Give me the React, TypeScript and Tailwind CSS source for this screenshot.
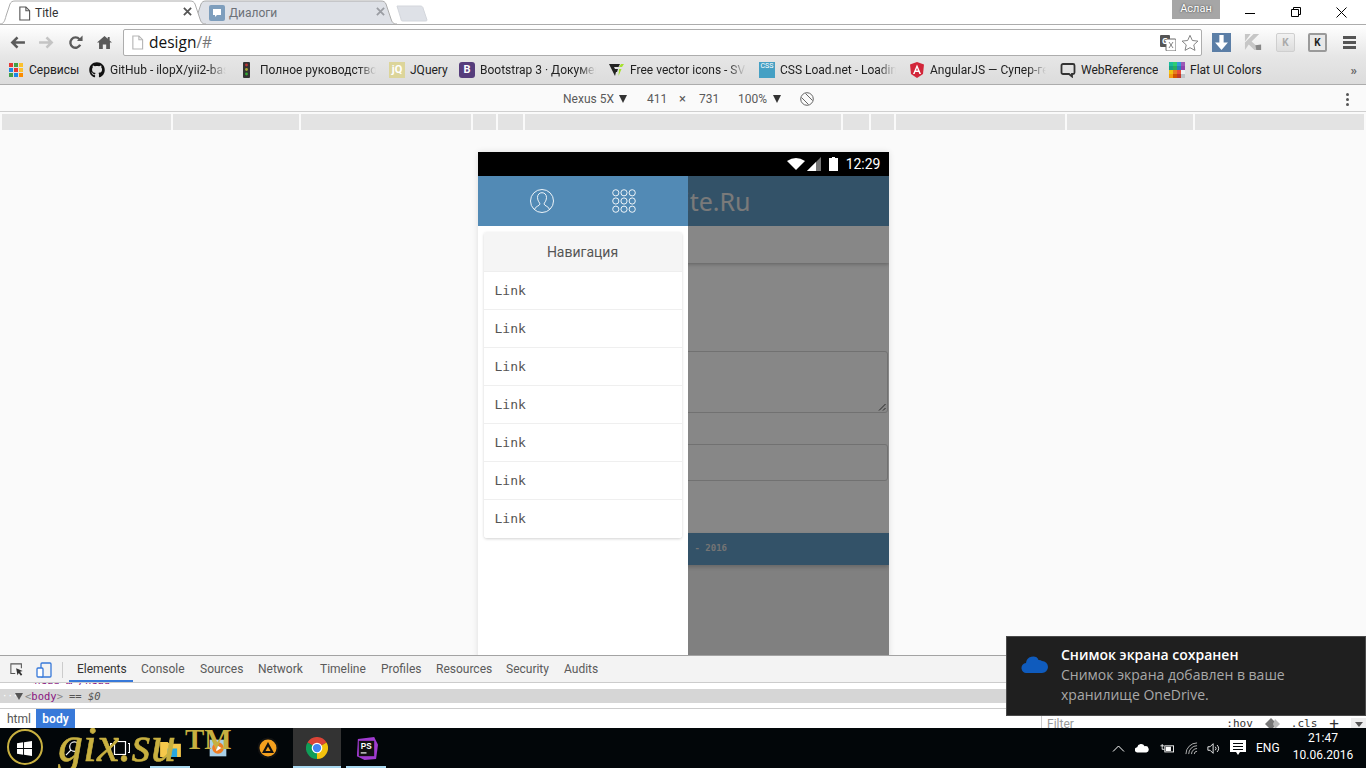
import React from "react";
import { FaGithub } from "react-icons/fa";

const chromeFont = "[font-family:Roboto,'Noto_Sans',sans-serif]";
const toastFont = "[font-family:'Open_Sans','Noto_Sans',sans-serif]";

function Doc({ className = "" }: { className?: string }) {
  return (
    <svg viewBox="0 0 14 16" className={className} fill="none" stroke="currentColor" strokeWidth="1.2">
      <path d="M2 1h6.5L12.5 5v10H2z" fill="#fff" />
      <path d="M8.5 1v4h4" />
    </svg>
  );
}

function X({ className = "" }: { className?: string }) {
  return (
    <svg viewBox="0 0 10 10" className={className} stroke="currentColor" strokeWidth="2">
      <path d="M1 1l8 8M9 1l-8 8" />
    </svg>
  );
}

function TabShape({ fill, stroke }: { fill: string; stroke: string }) {
  return (
    <svg viewBox="0 0 206 24" preserveAspectRatio="none" className="absolute inset-0 h-full w-full">
      <path d="M0 24C4 24 5 20 6 16L10 4C11 2 12 1 15 1H190C193 1 194 2 195 4L200 19C201 22 202 24 206 24" fill={fill} stroke={stroke} strokeWidth="1" />
    </svg>
  );
}

function Tab({ active, title, close, closeRight, icon }: { active?: boolean; title: string; close: string; closeRight: string; icon: React.ReactNode }) {
  return (
    <div className={`relative flex h-6 w-[206px] shrink-0 items-center pl-[18px] pt-[2px] ${active ? "z-10" : "-ml-[15px]"}`}>
      <TabShape fill={active ? "#ffffff" : "#dee1e7"} stroke="#acacac" />
      <div className="relative flex w-full items-center">
        {icon}
        <span className={`ml-[4px] text-[12px] ${active ? "text-[#333]" : "text-[#6d7178]"}`}>{title}</span>
        <X className={`absolute top-[3px] h-[9px] w-[9px] ${closeRight} ${close}`} />
      </div>
    </div>
  );
}

const bookmarks: { w: number; text: string; fade?: boolean; icon: React.ReactNode }[] = [
  {
    w: 81,
    text: "Сервисы",
    icon: (
      <svg viewBox="0 0 14 14" className="h-[14px] w-[14px]">
        {["#e53935", "#43a047", "#fbc02d", "#1e88e5", "#e53935", "#fbc02d", "#43a047", "#1e88e5", "#fb8c00"].map((c, i) => (
          <rect key={i} x={(i % 3) * 5} y={Math.floor(i / 3) * 5} width="4" height="4" fill={c} />
        ))}
      </svg>
    ),
  },
  { w: 150, text: "GitHub - ilopX/yii2-basic", fade: true, icon: <FaGithub className="h-4 w-4 text-[#111]" /> },
  {
    w: 150,
    text: "Полное руководство по",
    fade: true,
    icon: (
      <svg viewBox="0 0 16 16" className="h-4 w-4">
        <rect x="4" y="0" width="7" height="16" rx="1" fill="#333" />
        <circle cx="7.500" cy="3" r="1.400" fill="#b33" />
        <circle cx="7.500" cy="7.500" r="1.400" fill="#aa3" />
        <circle cx="7.500" cy="12" r="1.400" fill="#3a3" />
      </svg>
    ),
  },
  {
    w: 70,
    text: "JQuery",
    icon: <span className="flex h-4 w-4 items-center justify-center bg-[#dcd59a] text-[11px] font-bold text-white">jQ</span>,
  },
  {
    w: 150,
    text: "Bootstrap 3 · Документация",
    fade: true,
    icon: <span className="flex h-4 w-4 items-center justify-center rounded-[3px] bg-[#563d7c] text-[11px] font-bold text-white">B</span>,
  },
  {
    w: 150,
    text: "Free vector icons - SVG",
    fade: true,
    icon: (
      <svg viewBox="0 0 16 16" className="h-4 w-4">
        <path d="M0 2h11l-1.500 3H5l1 2h3l-1 3-1 0-1 4z" fill="#222" />
        <path d="M12 2h3l-2 3h-3zM10 7h2.500l-3 7z" fill="#a6e22e" />
      </svg>
    ),
  },
  {
    w: 150,
    text: "CSS Load.net - Loading",
    fade: true,
    icon: (
      <span className="flex h-4 w-4 items-start justify-center bg-[#45a0c4] text-[7px] leading-[8px] text-white">CSS</span>
    ),
  },
  {
    w: 151,
    text: "AngularJS — Супер-геройский",
    fade: true,
    icon: (
      <svg viewBox="0 0 16 16" className="h-4 w-4">
        <path d="M8 0L15 2.500 14 12 8 16 2 12 1 2.500z" fill="#d2263a" />
        <path d="M8 2.500L4 12h1.600l.8-2h3.200l.8 2H12zM7 8.600L8 6l1 2.600z" fill="#fff" />
      </svg>
    ),
  },
  {
    w: 109,
    text: "WebReference",
    icon: (
      <svg viewBox="0 0 16 16" className="h-4 w-4" fill="none" stroke="#333" strokeWidth="1.8">
        <path d="M3 2h10a1.500 1.500 0 0 1 1.500 1.500v7A1.500 1.500 0 0 1 13 12h-1v2.500L9 12H3a1.500 1.500 0 0 1-1.500-1.500v-7A1.500 1.500 0 0 1 3 2z" />
      </svg>
    ),
  },
  {
    w: 150,
    text: "Flat UI Colors",
    icon: (
      <svg viewBox="0 0 15 15" className="h-4 w-4">
        {["#1abc9c", "#2ecc71", "#3498db", "#9b59b6", "#16a085", "#27ae60", "#2980b9", "#8e44ad", "#f1c40f", "#e67e22", "#e74c3c", "#ecf0f1", "#f39c12", "#d35400", "#c0392b", "#bdc3c7"].map((c, i) => (
          <rect key={i} x={(i % 4) * 3.75} y={Math.floor(i / 4) * 3.75} width="3.750" height="3.750" fill={c} />
        ))}
      </svg>
    ),
  },
];

const segments = [169, 126, 170, 23, 25, 316, 26, 23, 169, 126, 169];
const devTabs: [string, number][] = [
  ["Elements", 64],
  ["Console", 59],
  ["Sources", 58],
  ["Network", 62],
  ["Timeline", 61],
  ["Profiles", 55],
  ["Resources", 70],
  ["Security", 58],
  ["Audits", 50],
];

function Chrome() {
  return (
    <svg viewBox="0 0 24 24" className="h-[22px] w-[22px]">
      <path d="M12 12L1.600 6A12 12 0 0 1 22.400 6Z" fill="#db4437" />
      <path d="M12 12L22.400 6A12 12 0 0 1 12 24Z" fill="#f4c20d" />
      <path d="M12 12L12 24A12 12 0 0 1 1.600 6Z" fill="#0f9d58" />
      <circle cx="12" cy="12" r="5.800" fill="#fff" />
      <circle cx="12" cy="12" r="4.500" fill="#4285f4" />
    </svg>
  );
}

function Cell({ children, w = "w-12", className = "" }: { children?: React.ReactNode; w?: string; className?: string }) {
  return <div className={`relative flex h-10 shrink-0 items-center justify-center ${w} ${className}`}>{children}</div>;
}

function Tri() {
  return <span className="h-0 w-0 shrink-0 border-x-[4px] border-t-[8px] border-x-transparent border-t-[#333]" />;
}

export default function App() {
  return (
    <div className={`relative flex h-[768px] w-[1366px] flex-col overflow-hidden bg-[#fafafa] ${chromeFont}`}>
      {/* Tab strip */}
      <div className="flex h-[25px] shrink-0 items-start border-b border-[#acacac] bg-white">
        <Tab active title="Title" close="text-[#555]" closeRight="right-[14px]" icon={<Doc className="h-[15px] w-[13px] text-[#555]" />} />
        <Tab
          title="Диалоги"
          close="text-[#9a9da3]"
          closeRight="right-[12px]"
          icon={
            <svg viewBox="0 0 16 16" className="h-4 w-4">
              <rect width="16" height="16" rx="2" fill="#7e9ebd" />
              <path d="M4 4h8v6H8l-2 2v-2H4z" fill="#fff" />
            </svg>
          }
        />
        <svg viewBox="0 0 32 17" className="-ml-[1px] mt-[5px] h-[17px] w-[32px] shrink-0">
          <path d="M1 1H24C26 1 27 2 27 3L31 15C31 16 30 16 29 16H7C5 16 5 15 5 14Z" fill="#dee1e7" stroke="#d3d6dc" />
        </svg>
        <div className="flex-1" />
        <div className="mr-[7px] flex h-[19px] w-[48px] items-center justify-center bg-[#a6a6a6] text-[11px] text-white [text-shadow:0_0_2px_#333]">Аслан</div>
        <div className="flex h-6 w-[139px] items-center">
          <div className="flex w-[46px] justify-center pt-px">
            <div className="mt-px h-px w-[10px] bg-black" />
          </div>
          <div className="flex w-[45px] justify-center">
            <svg viewBox="0 0 10 10" className="h-[10px] w-[10px]" fill="none" stroke="#000">
              <path d="M.5 2.500h7v7h-7zM2.500 2.500v-2h7v7h-2" />
            </svg>
          </div>
          <div className="flex w-[46px] justify-center">
            <svg viewBox="0 0 11 11" className="h-[11px] w-[11px]" stroke="#000">
              <path d="M.5.5l10 10M10.500.5l-10 10" />
            </svg>
          </div>
        </div>
      </div>

      {/* Toolbar */}
      <div className="flex h-[32px] shrink-0 items-center bg-gradient-to-b from-white to-[#e6e6e6] pb-px pt-[4px]">
        <div className="flex w-[32px] justify-center pl-[2px]">
          <svg viewBox="0 0 16 14" className="h-[13px] w-[15px]" fill="none" stroke="#5a5a5a" strokeWidth="2.800">
            <path d="M16 7H3M8 1.500L2.500 7 8 12.500" />
          </svg>
        </div>
        <div className="flex w-[29px] justify-center">
          <svg viewBox="0 0 16 14" className="h-[13px] w-[15px]" fill="none" stroke="#c4c4c4" strokeWidth="2.800">
            <path d="M0 7h13M8 1.500L13.500 7 8 12.500" />
          </svg>
        </div>
        <div className="flex w-[29px] justify-center">
          <svg viewBox="0 0 16 16" className="h-[15px] w-[15px]" fill="none">
            <path d="M13 10.500A5.500 5.500 0 1 1 12.200 4.500" stroke="#5a5a5a" strokeWidth="2.500" />
            <path d="M9.500 6.500H15.500V.5z" fill="#5a5a5a" />
          </svg>
        </div>
        <div className="flex w-[29px] justify-center">
          <svg viewBox="0 0 16 16" className="h-[15px] w-[15px]">
            <path d="M8 1L0 8h2.200v7h4V10h3.600v5h4V8H16l-2.500-2.200V2h-2v2z" fill="#5a5a5a" />
          </svg>
        </div>
        <div className={`ml-[4px] flex h-[27px] w-[1079px] items-center rounded-[2px] border border-[#adadad] bg-white pl-[7px] pr-[2px] ${toastFont}`}>
          <Doc className="h-[15px] w-[13px] text-[#b5b5b5]" />
          <span className="ml-[5px] text-[15.5px] leading-none text-[#111]">
            design<span className="text-[#777]">/#</span>
          </span>
          <div className="flex-1" />
          <svg viewBox="0 0 16 16" className="h-4 w-4">
            <rect x="0" y="0" width="10" height="12" rx="1" fill="#555" />
            <rect x="6" y="4" width="10" height="12" rx="1" fill="#fff" stroke="#666" />
            <text x="2" y="9" fontSize="8" fontWeight="700" fill="#fff">G</text>
            <path d="M9 7l4 6M13 7l-4 6" stroke="#666" strokeWidth="0.800" />
          </svg>
          <svg viewBox="0 0 20 20" className="ml-[5px] h-[18px] w-[18px]" fill="#fff" stroke="#777">
            <path d="M10 1.500l2.600 5.700 6.200.7-4.600 4.200 1.300 6.100L10 15.200l-5.500 3 1.300-6.100L1.200 7.900l6.200-.7z" />
          </svg>
        </div>
        <div className="ml-[10px] flex h-[19px] w-[19px] items-center justify-center bg-[#5b7ea6]">
          <svg viewBox="0 0 14 14" className="h-[15px] w-[15px]">
            <path d="M5 0h4v7h4l-6 7-6-7h4z" fill="#fff" />
          </svg>
        </div>
        <svg viewBox="0 0 20 20" className="ml-[13px] h-[19px] w-[19px]">
          <path d="M1 1h6L1 9zM1 10l9-9h6L8 9l10 9h-7L5 12l-4 6z" fill="#c6c6c6" />
          <path d="M12 13l6-1v6h-5z" fill="#888" />
        </svg>
        <div className="ml-[13px] flex h-[19px] w-[19px] items-center justify-center rounded-[2px] border border-[#cfcfcf] bg-gradient-to-b from-[#f2f2f2] to-[#dddddd] text-[10px] font-bold text-[#aaa]">K</div>
        <div className="ml-[13px] flex h-[19px] w-[19px] items-center justify-center rounded-[2px] border-2 border-[#9a9a9a] bg-[#e8e8e8] text-[10px] font-bold text-[#222]">K</div>
        <div className="ml-[16px] flex w-[13px] flex-col gap-[2px]">
          <div className="h-[3px] bg-[#555]" />
          <div className="h-[3px] bg-[#555]" />
          <div className="h-[3px] bg-[#555]" />
        </div>
      </div>

      {/* Bookmarks */}
      <div className="flex h-[28px] shrink-0 items-center border-b border-[#acacac] bg-gradient-to-b from-[#e6e6e6] to-[#dcdcdc] pb-px pl-[8px]">
        {bookmarks.map((b) => (
          <div key={b.text} className="flex shrink-0 items-center" style={{ width: b.w }}>
            <div className="flex w-4 shrink-0 justify-center">{b.icon}</div>
            <span
              className={`ml-[5px] overflow-hidden whitespace-nowrap text-[12px] leading-4 text-[#222] ${b.fade ? "w-[116px] [mask-image:linear-gradient(to_right,black_85%,transparent)]" : ""}`}
            >
              {b.text}
            </span>
          </div>
        ))}
        <div className="flex-1" />
        <span className="mr-[9px] text-[13px] font-bold leading-none text-[#666]">»</span>
      </div>

      {/* Device bar */}
      <div className="relative flex h-[27px] shrink-0 items-center border-b border-[#cfcfcf] bg-[#fafafa] pt-[2px] text-[12px] text-[#5a5a5a]">
        <span className="ml-[563px] w-[56px]">Nexus 5X</span>
        <Tri />
        <span className="ml-[20px] w-[32px]">411</span>
        <span className="w-[20px] text-[13px]">×</span>
        <span className="w-[39px]">731</span>
        <span className="w-[35px]">100%</span>
        <Tri />
        <svg viewBox="0 0 14 14" className="ml-[19px] h-[14px] w-[14px]" fill="none" stroke="#666">
          <circle cx="7" cy="7" r="6.300" />
          <path d="M1.500 5.500l7 7M5.500 1.500l7 7" />
        </svg>
        <div className="ml-auto mr-[17px] flex flex-col gap-[2px]">
          <div className="h-[3px] w-[3px] rounded-full bg-[#555]" />
          <div className="h-[3px] w-[3px] rounded-full bg-[#555]" />
          <div className="h-[3px] w-[3px] rounded-full bg-[#555]" />
        </div>
      </div>

      {/* Media query bar */}
      <div className="mt-[2px] flex h-[16px] shrink-0 gap-[2px] px-[2px]">
        {segments.map((w, i) => (
          <div key={i} className="h-full bg-[#e3e3e3]" style={{ width: w }} />
        ))}
      </div>

      {/* Emulated viewport */}
      <div className="h-[525px] shrink-0 overflow-hidden bg-[#fafafa] pt-[22px]">
        <div className="relative mx-auto flex h-[731px] w-[411px] flex-col overflow-hidden bg-white shadow-[0_0_6px_rgba(0,0,0,0.12)]">
          <div className="flex h-6 shrink-0 items-center justify-end bg-black pr-2">
            <svg viewBox="0 0 18 12" className="h-3 w-[18px]">
              <path d="M0 3Q9-3 18 3L9 12z" fill="#fff" />
            </svg>
            <svg viewBox="0 0 14 14" className="ml-[2px] h-[14px] w-[14px]">
              <path d="M14 0V14H0z" fill="#777" />
              <path d="M9 5V14H0z" fill="#fff" />
            </svg>
            <svg viewBox="0 0 9 14" className="ml-[8px] h-[14px] w-[9px]">
              <path d="M3 0h3v1h3v13H0V1h3z" fill="#fff" />
            </svg>
            <span className="ml-[8px] text-[14px] text-white">12:29</span>
          </div>
          <div className="relative flex h-[50px] shrink-0 items-center bg-[#609bc4] pl-[192px]">
            <span className="[font-family:'Noto_Sans',sans-serif] text-[25px] leading-none text-[#e6e6e6]">Site.Ru</span>
          </div>
          <div className="h-[37px] shrink-0 bg-white shadow-[0_1px_4px_rgba(0,0,0,0.3)]" />
          <div className="flex-1 px-[1px] pt-[88px]">
            <div className="relative ml-auto h-[62px] w-[300px] rounded-[3px] border border-[#d5d5d5]">
              <svg viewBox="0 0 8 8" className="absolute bottom-[1px] right-[1px] h-2 w-2" stroke="#333" strokeWidth="0.900">
                <path d="M1 7.500L7.500 1M5 7.500L7.500 5" />
              </svg>
            </div>
            <div className="ml-auto mt-[31px] h-[37px] w-[300px] rounded-[3px] border border-[#d5d5d5]" />
          </div>
          <div className="absolute inset-x-0 bottom-0 top-[413px] bg-[#f1f1f1]" />
          <div className="absolute inset-x-0 top-[381px] flex h-[32px] items-center bg-[#609bc4] pl-[217px] shadow-[0_2px_4px_rgba(0,0,0,0.2)] [font-family:'DejaVu_Sans_Mono',monospace] text-[9px] font-bold text-[#dcdcdc]">
            - 2016
          </div>

          {/* Dim overlay */}
          <div className="absolute inset-x-0 bottom-0 top-6 bg-black/[0.47]" />

          {/* Drawer */}
          <div className="absolute bottom-0 left-0 top-6 flex w-[210px] flex-col bg-white">
            <div className="flex h-[50px] shrink-0 items-center justify-center gap-[58px] bg-[#528ab5]">
              <svg viewBox="0 0 24 24" className="h-6 w-6" fill="none" stroke="#fff" strokeWidth="0.900">
                <circle cx="12" cy="12" r="11.500" />
                <path d="M4.500 20.500c.5-3 5-3.500 5.500-5.500 0-1-2.500-2.800-2.500-6.500 0-3 2-4.800 4.500-4.800s4.500 1.800 4.500 4.800c0 3.700-2.500 5.500-2.500 6.500.5 2 5 2.500 5.500 5.500" />
              </svg>
              <svg viewBox="0 0 24 24" className="h-6 w-6" fill="none" stroke="#fff" strokeWidth="0.900">
                {[0, 1, 2].flatMap((r) =>
                  [0, 1, 2].map((c) => <circle key={`${r}${c}`} cx={3.800 + c * 8.200} cy={3.800 + r * 8.200} r="3.100" />)
                )}
              </svg>
            </div>
            <div className="mx-[6px] mt-[6px] overflow-hidden rounded-[3px] shadow-[0_1px_3px_rgba(0,0,0,0.18)]">
              <div className="flex h-[40px] items-center justify-center border-b border-[#eee] bg-[#f5f5f5] pt-px text-[14px] text-[#555]">Навигация</div>
              {[0, 1, 2, 3, 4, 5, 6].map((i) => (
                <div key={i} className="flex h-[38px] items-center border-b border-[#efefef] bg-white pl-[11px] [font-family:'DejaVu_Sans_Mono',monospace] text-[13px] text-[#555] last:border-b-0">
                  Link
                </div>
              ))}
            </div>
          </div>
        </div>
      </div>

      {/* DevTools */}
      <div className="flex h-[73px] shrink-0 flex-col border-t border-[#a3a3a3] bg-white">
        <div className="flex h-[27px] shrink-0 items-center border-b border-[#ccc] bg-[#f3f3f3] pt-[2px]">
          <svg viewBox="0 0 16 16" className="ml-[10px] h-[14px] w-[14px]" fill="none" stroke="#555" strokeWidth="1.200">
            <path d="M6 12H1V1h12v5" />
            <path d="M7 6l7.500 3-3 1 2.500 3-1.500 1.500-2.500-3-1.500 2.500z" fill="#333" stroke="none" />
          </svg>
          <svg viewBox="0 0 16 16" className="ml-[12px] h-[16px] w-[16px]" fill="none" stroke="#3879d9" strokeWidth="1.300">
            <rect x="5" y="1" width="10" height="14" rx="1" />
            <rect x="1" y="6" width="6" height="9" rx="1" fill="#fff" />
          </svg>
          <div className="ml-[10px] h-[16px] w-px bg-[#ccc]" />
          <div className="ml-[6px] flex h-full">
            {devTabs.map(([t, w], i) => (
              <div
                key={t}
                className={`flex h-full items-center border-b-2 pl-[8px] text-[12px] ${i === 0 ? "border-[#3879d9] text-[#333]" : "border-transparent text-[#5a5a5a]"}`}
                style={{ width: w }}
              >
                {t}
              </div>
            ))}
          </div>
        </div>
        <div className="flex flex-1 overflow-hidden">
          <div className="flex min-w-0 flex-1 flex-col">
            <div className="h-[26px] overflow-hidden border-b border-[#ccc] [font-family:'DejaVu_Sans_Mono',monospace] text-[10.5px]">
              <div className="-mt-[10px] h-[16px] pl-[28px] leading-[14px] text-[#881280]">&lt;head&gt;…&lt;/head&gt;</div>
              <div className="flex h-[14px] items-center bg-[#d6d6d6] leading-[14px] text-[#881280]">
                <span className="w-[15px] pl-[2px] text-[9px] leading-none text-white">···</span>
                <span className="h-0 w-0 border-x-[4px] border-t-[7px] border-x-transparent border-t-[#555]" />
                <span className="ml-[2px] text-[#888]">&lt;</span>
                <span>body</span>
                <span className="text-[#888]">&gt;</span>
                <span className="ml-[6px] italic text-[#555]">== $0</span>
              </div>
              <div className="mt-[2px] h-[14px] pl-[40px] leading-[14px] text-[#994500]">&lt;div id="body" class="display-block"&gt;</div>
            </div>
            <div className="flex flex-1 items-stretch text-[12px]">
              <span className="flex w-[36px] items-center pl-[7px] text-[#555]">html</span>
              <span className="flex w-[39px] items-center justify-center bg-[#3879d9] font-semibold text-white">body</span>
            </div>
          </div>
          <div className="flex w-[325px] shrink-0 items-end justify-between overflow-hidden border-l border-[#ccc] pl-[5px] text-[12px] leading-[12px]">
            <span className="translate-y-[2px] text-[#999]">Filter</span>
            <div className="flex translate-y-[2px] items-center [font-family:'DejaVu_Sans_Mono',monospace] text-[#333]">
              <span className="text-[11px]">:hov</span>
              <svg viewBox="0 0 16 12" className="ml-[12px] h-[12px] w-[16px]">
                <path d="M6 0l6 6-6 6-6-6z" fill="#777" />
                <path d="M10 1l5 5-5 5-2-5z" fill="#bbb" />
              </svg>
              <span className="ml-[10px] text-[11px]">.cls</span>
              <span className="ml-[12px] text-[16px] leading-[12px]">+</span>
              <span className="ml-[12px] flex h-[12px] w-[15px] items-center justify-center bg-[#eee]">
                <span className="h-0 w-0 border-x-[4px] border-t-[5px] border-x-transparent border-t-[#555]" />
              </span>
            </div>
          </div>
        </div>
      </div>

      {/* Taskbar */}
      <div className="flex h-10 shrink-0 items-center bg-[#020609] pr-[13px] text-white">
        <Cell>
          <svg viewBox="0 0 16 16" className="h-[15px] w-[15px]" fill="#fff">
            <path d="M0 2.300L6.500 1.400V7.500H0zM7.500 1.300L16 0V7.500H7.500zM0 8.500H6.500V14.600L0 13.700zM7.500 8.500H16V16L7.500 14.700z" />
          </svg>
        </Cell>
        <Cell>
          <svg viewBox="0 0 16 16" className="h-[15px] w-[15px]" fill="none" stroke="#fff" strokeWidth="1.300">
            <circle cx="10" cy="6" r="5" />
            <path d="M6.500 9.500L1 15" />
          </svg>
        </Cell>
        <Cell>
          <svg viewBox="0 0 20 14" className="h-[14px] w-[20px]" fill="none" stroke="#fff" strokeWidth="1.200">
            <rect x="4.500" y=".5" width="11" height="13" />
            <path d="M2 2.500H.5v9H2M18 2.500h1.500v9H18" />
          </svg>
        </Cell>
        <Cell className="ml-[2px] after:absolute after:inset-x-1 after:bottom-0 after:h-[2px] after:bg-[#a8d8f0]">
          <svg viewBox="0 0 22 18" className="h-[17px] w-[21px]">
            <path d="M0 2h8l2 2h12v14H0z" fill="#f5c84b" />
            <rect x="8" y="9" width="10" height="9" fill="#29a8e0" />
          </svg>
        </Cell>
        <Cell>
          <svg viewBox="0 0 24 24" className="h-[20px] w-[20px]">
            <rect x="2" y="2" width="20" height="20" fill="#a9cfe6" />
            <circle cx="12" cy="12" r="7" fill="#ef7d22" />
            <path d="M10 8l6 4-6 4z" fill="#fff" />
          </svg>
        </Cell>
        <Cell className="ml-[2px]">
          <svg viewBox="0 0 22 22" className="h-[22px] w-[22px]">
            <circle cx="11" cy="11" r="10.500" fill="#111" />
            <circle cx="11" cy="11" r="8.500" fill="#f5a01e" />
            <path d="M11 5L17 16H5z" fill="#111" />
            <path d="M11 9.500L13.500 14h-5z" fill="#f5a01e" />
          </svg>
        </Cell>
        <Cell className="ml-px bg-[#333] after:absolute after:inset-x-0 after:bottom-0 after:h-[2px] after:bg-[#a8d8f0]">
          <Chrome />
        </Cell>
        <Cell w="w-[40px]" className="ml-[5px] after:absolute after:inset-x-0 after:bottom-0 after:h-[2px] after:bg-[#a8d8f0]">
          <svg viewBox="0 0 24 24" className="h-[23px] w-[23px]">
            <path d="M3 2L20 0l4 8-2 15-12 1-8-4z" fill="#a03bd0" />
            <rect x="4" y="4" width="16" height="16" fill="#111" />
            <text x="6" y="13" fontSize="8.500" fontWeight="700" fill="#fff" fontFamily="Liberation Sans">PS</text>
            <rect x="6" y="16" width="6" height="1.200" fill="#fff" />
          </svg>
        </Cell>
        <div className="flex-1" />
        <svg viewBox="0 0 12 7" className="h-[7px] w-[13px]" fill="none" stroke="#fff">
          <path d="M.5 6.500L6 1l5.500 5.500" />
        </svg>
        <svg viewBox="0 0 16 10" className="ml-[10px] h-[10px] w-[14px]" fill="#fff">
          <path d="M3 10a3 3 0 0 1-.5-6A4.500 4.500 0 0 1 11 3a3.500 3.500 0 0 1 2 7z" />
        </svg>
        <svg viewBox="0 0 16 10" className="ml-[11px] h-[10px] w-[14px]" fill="none" stroke="#fff">
          <path d="M.5 2.500h4M2.500.5v4M2.500 4.500v2H5" />
          <rect x="5.500" y="2.500" width="10" height="7" />
          <rect x="6.500" y="3.500" width="6" height="5" fill="#fff" stroke="none" />
        </svg>
        <svg viewBox="0 0 14 14" className="ml-[11px] h-[13px] w-[13px]" fill="none" stroke="#bbb">
          <path d="M1 13A12 12 0 0 1 13 1M4 13a9 9 0 0 1 9-9M7 13a6 6 0 0 1 6-6M10 13a3 3 0 0 1 3-3" />
        </svg>
        <svg viewBox="0 0 16 13" className="ml-[9px] h-[13px] w-[14px]" fill="none" stroke="#fff">
          <path d="M1 4.500h2.500L7 1v11L3.500 8.500H1zM9.500 4.500a3 3 0 0 1 0 4M11.500 2.500a6 6 0 0 1 0 8" />
        </svg>
        <svg viewBox="0 0 16 16" className="ml-[9px] h-[16px] w-[16px]" fill="#fff">
          <path d="M0 0h16v12h-6l-2 3-2-3H0zM3 3v1h10V3zM3 6v1h10V6zM3 9v1h10V9z" fillRule="evenodd" />
        </svg>
        <span className="ml-[10px] w-[23px] whitespace-nowrap text-[12px] leading-none">ENG</span>
        <div className="ml-[14px] flex w-[60px] -translate-y-[1px] flex-col items-center text-[12px] leading-[17px]">
          <span>21:47</span>
          <span className="whitespace-nowrap">10.06.2016</span>
        </div>
      </div>

      {/* Screenshot-tool watermark */}
      <div className="pointer-events-none absolute bottom-0 left-0 h-10 w-[240px] overflow-hidden text-[#c8b040] [font-family:'Liberation_Serif',serif]">
        <div className="absolute left-[7px] top-[1px] h-[36px] w-[36px] rounded-full border-2 border-[#c8b040]" />
        <span className="absolute left-[58px] top-[-13px] text-[50px] italic leading-[58px] [-webkit-text-stroke:0.6px_#c8b040]">gix.su</span>
        <span className="absolute left-[185px] top-[-7px] text-[29px] font-bold leading-[36px]">TM</span>
      </div>

      {/* Toast */}
      <div className={`absolute left-[1006px] top-[636px] flex h-[80px] w-[360px] border border-[#4a4a4a] bg-[#1f1f1f] ${toastFont}`}>
        <svg viewBox="0 0 28 18" className="ml-[13px] mt-[18px] h-[18px] w-[28px]">
          <path d="M7 18a5 5 0 0 1-1-10A7 7 0 0 1 19 5a5 5 0 0 1 3 1 6 6 0 0 1 0 12z" fill="#0f5bbd" />
          <path d="M5 8A7 7 0 0 1 19 5" fill="none" stroke="#1f1f1f" strokeWidth="0.800" />
        </svg>
        <div className="ml-[13px] mt-[8px] text-[14px] leading-[20px]">
          <div className="font-semibold text-white">Снимок экрана сохранен</div>
          <div className="text-[#a8a8a8]">Снимок экрана добавлен в ваше</div>
          <div className="text-[#a8a8a8]">хранилище OneDrive.</div>
        </div>
      </div>
    </div>
  );
}
